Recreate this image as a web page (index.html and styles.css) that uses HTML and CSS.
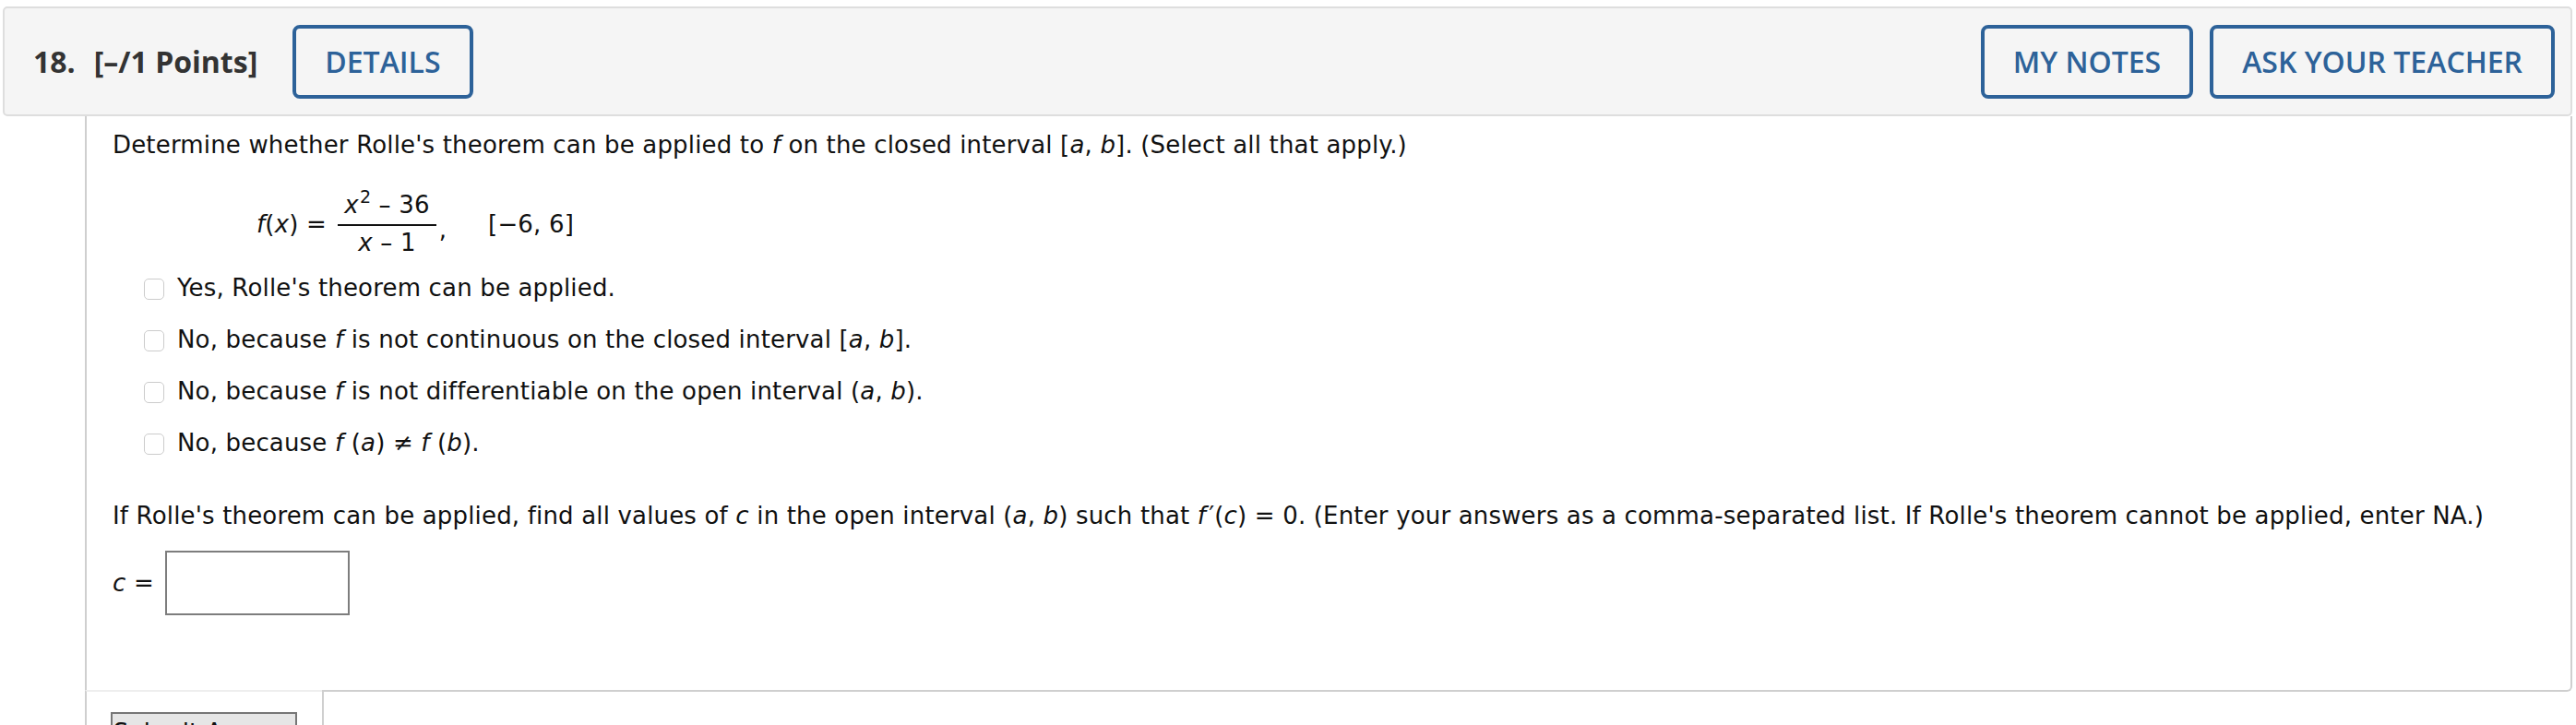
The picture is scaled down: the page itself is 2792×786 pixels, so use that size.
FILE: index.html
```html
<!DOCTYPE html>
<html lang="en">
<head>
<meta charset="utf-8">
<title>Question 18</title>
<link rel="stylesheet" href="styles.css">
</head>
<body>
<div class="page">
  <div class="qhead">
    <div class="qtitle"><span class="qnum">18.</span><span class="pts">[–/1 Points]</span></div>
    <button class="hbtn details">DETAILS</button>
    <div class="spacer"></div>
    <div class="hbtns">
      <button class="hbtn">MY NOTES</button>
      <button class="hbtn">ASK YOUR TEACHER</button>
    </div>
  </div>
  <div class="qbody">
    <p class="prompt">Determine whether Rolle's theorem can be applied to <i>f</i> on the closed interval [<i>a</i>, <i>b</i>]. (Select all that apply.)</p>
    <div class="formula">
      <span class="lhs"><i>f</i>(<i>x</i>) = </span>
      <span class="frac">
        <span class="num"><i>x</i><sup>2</sup> – 36</span>
        <span class="den"><i>x</i> – 1</span>
      </span>
      <span class="comma">,</span>
      <span class="interval">[−6, 6]</span>
    </div>
    <ul class="opts">
      <li class="opt"><span class="cb"></span><span>Yes, Rolle's theorem can be applied.</span></li>
      <li class="opt"><span class="cb"></span><span>No, because <i>f</i> is not continuous on the closed interval [<i>a</i>, <i>b</i>].</span></li>
      <li class="opt"><span class="cb"></span><span>No, because <i>f</i> is not differentiable on the open interval (<i>a</i>, <i>b</i>).</span></li>
      <li class="opt"><span class="cb"></span><span>No, because <i>f</i> (<i>a</i>) ≠ <i>f</i> (<i>b</i>).</span></li>
    </ul>
    <p class="prompt second">If Rolle's theorem can be applied, find all values of <i>c</i> in the open interval (<i>a</i>, <i>b</i>) such that <i>f</i><span class="prime">′</span>(<i>c</i>) = 0. (Enter your answers as a comma-separated list. If Rolle's theorem cannot be applied, enter NA.)</p>
    <div class="answer"><span class="lbl"><i>c</i> =</span><span class="box"></span></div>
  </div>
  <div class="qfoot">
    <div class="submit-cell"><button class="submit">Submit Answer</button></div>
    <div class="foot-right"></div>
  </div>
</div>
</body>
</html>
```
FILE: styles.css
```css
html, body {
  margin: 0;
  padding: 0;
  background: #fff;
}
body {
  font-family: "DejaVu Sans", Verdana, sans-serif;
  color: #111;
  overflow: hidden;
}
.page {
  padding: 7px 4px 0 3px;
}
.qhead {
  display: flex;
  align-items: center;
  height: 115px;
  background: #f5f5f5;
  border: 2px solid #dedede;
  border-radius: 5px;
  padding: 0 17px 0 31px;
  font-family: "Open Sans", sans-serif;
}
.qtitle {
  font-size: 32px;
  font-weight: 700;
  color: #333;
  white-space: nowrap;
}
.qnum {
  margin-right: 20px;
}
.hbtn {
  font-family: "Open Sans", sans-serif;
  font-size: 32px;
  font-weight: 600;
  color: #2d6299;
  background: transparent;
  border: 4px solid #2d6299;
  border-radius: 8px;
  height: 80px;
  padding: 0 31px;
  line-height: 1;
}
.details {
  margin-left: 38px;
}
.spacer {
  flex: 1;
}
.hbtns {
  display: flex;
  gap: 18px;
}
.qbody {
  margin-left: 89px;
  border-left: 2px solid #cfcfcf;
  border-right: 2px solid #cfcfcf;
  border-bottom: 2px solid #cfcfcf;
  border-bottom-right-radius: 6px;
  padding: 16px 28px 81px 28px;
  font-size: 26px;
  line-height: 30px;
  letter-spacing: 0.17px;
}
.prompt {
  margin: 0;
}
.formula {
  display: flex;
  align-items: center;
  margin: 35px 0 0 156px;
}
.lhs {
  white-space: pre;
}
.frac {
  display: flex;
  flex-direction: column;
  align-items: center;
  margin-left: 4px;
}
.num {
  padding: 0 7px 6px;
  border-bottom: 2px solid #111;
  line-height: 30px;
}
.num sup {
  font-size: 19px;
  line-height: 0;
  vertical-align: 11px;
  margin-left: 1px;
}
.den {
  padding-top: 3px;
  line-height: 30px;
}
.comma {
  align-self: center;
  margin-top: 12px;
  margin-left: 3px;
}
.interval {
  margin-left: 45px;
}
.opts {
  list-style: none;
  margin: 19px 0 0 34px;
  padding: 0;
  display: flex;
  flex-direction: column;
  gap: 26px;
}
.opt {
  display: flex;
  align-items: flex-start;
}
.cb {
  width: 20px;
  height: 21px;
  border: 1.5px solid #cccccc;
  border-radius: 5px;
  background: #fff;
  margin-top: 5px;
  margin-right: 14px;
  flex: none;
}
.prime {
  margin-left: 3px;
}
.second {
  margin-top: 49px;
}
.answer {
  display: flex;
  align-items: center;
  margin-top: 23px;
}
.lbl {
  margin-right: 12px;
}
.box {
  width: 196px;
  height: 66px;
  border: 2px solid #7d7d7d;
}
.qfoot {
  display: flex;
  margin-left: 89px;
  margin-top: -2px;
}
.submit-cell {
  width: 229px;
  border-left: 2px solid #cfcfcf;
  border-top: 2px solid #eeeeee;
  background: #fff;
  padding: 22px 0 0 26px;
}
.submit {
  width: 202px;
  background: #e6e6e6;
  border: 2px solid #767676;
  font-family: "DejaVu Sans", sans-serif;
  font-size: 26px;
  line-height: 30px;
  color: #111;
  padding: 5px 0 12px;
  white-space: nowrap;
}
.foot-right {
  flex: 1;
  border-left: 2px solid #cfcfcf;
  height: 60px;
}
```
